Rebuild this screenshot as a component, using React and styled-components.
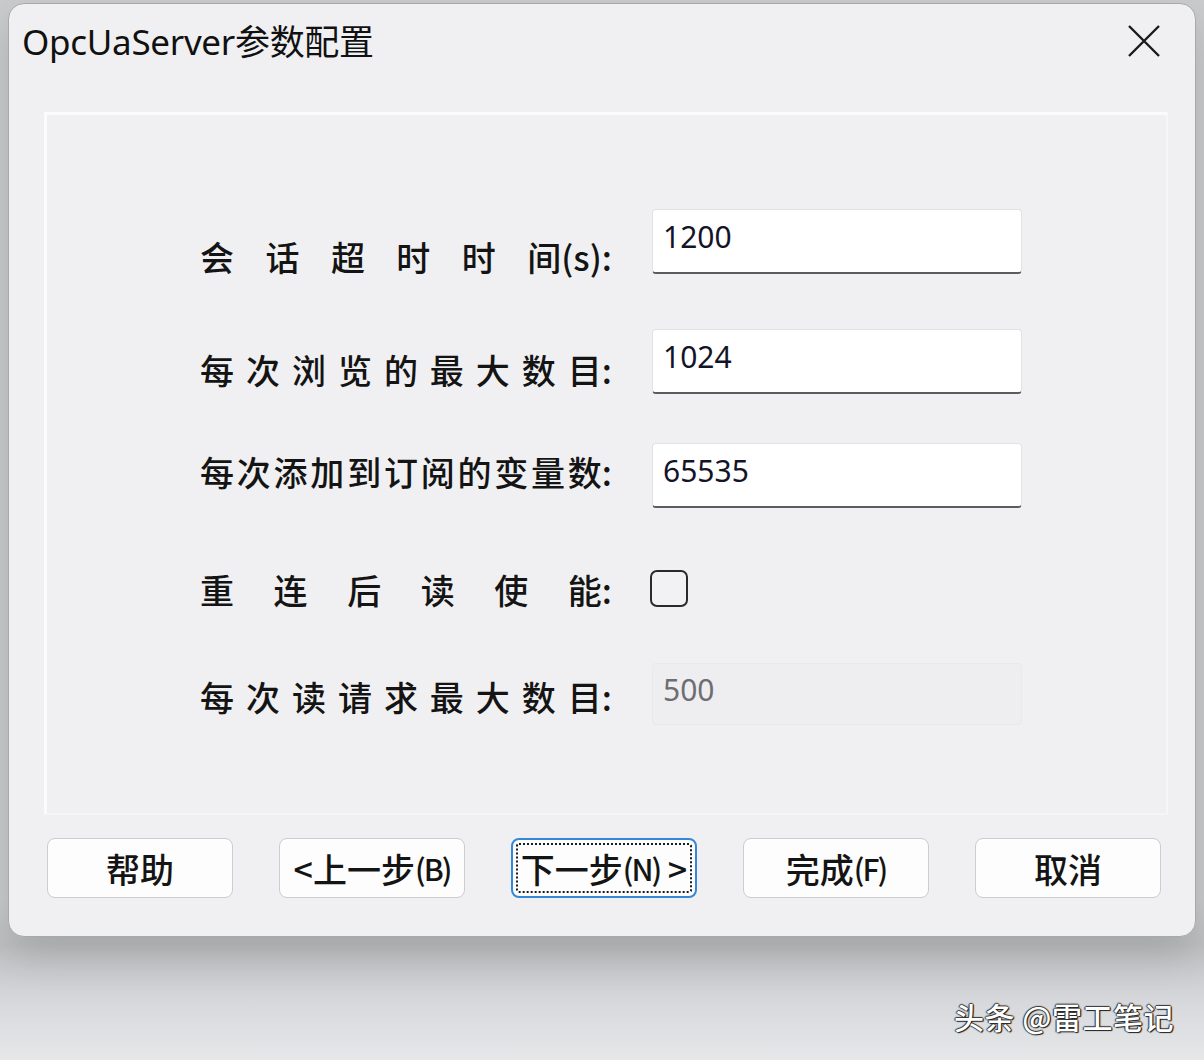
import React from 'react';
import styled, { createGlobalStyle } from 'styled-components';

const GlobalStyle = createGlobalStyle`
  html, body {
    margin: 0;
    padding: 0;
  }
  body {
    width: 1204px;
    height: 1060px;
    overflow: hidden;
    background: #cbccce;
    font-family: "Noto Sans", "Noto Sans CJK SC", sans-serif;
  }
`;

const Page = styled.div`
  display: flex;
  flex-direction: column;
  padding: 3px 8px 0;
  background: linear-gradient(#cbccce 0px, #cbccce 900px, #c0c1c3 945px, #d8d9dc 1005px, #e6e7e9 1060px);
  height: 1060px;
  box-sizing: border-box;
`;

const Dialog = styled.div`
  width: 1188px;
  height: 934px;
  box-sizing: border-box;
  border: 1px solid #a8a9ab;
  border-radius: 16px;
  background: #f0f0f2;
  box-shadow: 0 16px 40px rgba(0, 0, 0, 0.16);
  display: flex;
  flex-direction: column;
`;

const TitleBar = styled.div`
  height: 108px;
  box-sizing: border-box;
  display: flex;
  justify-content: space-between;
  align-items: flex-start;
  padding: 14px 34px 0 13px;
`;

const Title = styled.div`
  font-family: "Noto Sans", "Noto Sans CJK SC", sans-serif;
  font-size: 35px;
  line-height: 48px;
  color: #111;
  letter-spacing: -0.3px;
`;

const CloseButton = styled.div`
  margin-top: 6px;
  width: 34px;
  height: 34px;
  display: flex;
`;

const GroupBox = styled.div`
  margin: 0 27px 0 35px;
  height: 703px;
  box-sizing: border-box;
  border-top: 3px solid #fbfbfc;
  border-left: 3px solid #fbfbfc;
  border-right: 2px solid #f6f6f8;
  border-bottom: 2px solid #f5f5f7;
  padding: 94px 0 0 153px;
`;

const Row = styled.div`
  display: flex;
  align-items: flex-start;
  gap: 40px;
  height: ${p => p.$h || 65}px;
  margin-top: ${p => p.$space || 0}px;
`;

const Label = styled.div`
  width: 412px;
  flex: none;
  display: flex;
  justify-content: space-between;
  font-family: "Noto Sans CJK SC", sans-serif;
  font-weight: 500;
  font-size: 34px;
  line-height: 40px;
  color: #141414;
  padding-top: ${p => p.$drop || 0}px;
  white-space: nowrap;
`;

const Field = styled.input`
  width: 370px;
  height: 65px;
  box-sizing: border-box;
  margin: 0;
  background: #fff;
  border: 1px solid #e2e2e4;
  border-bottom: 2px solid #5c5c5f;
  border-radius: 4px;
  padding: 0 10px 10px;
  font-family: "Noto Sans", sans-serif;
  font-size: 30px;
  color: #141428;
  outline: none;

  &:disabled {
    height: 62px;
    background: #eeeef0;
    border: 1px solid #e9e9eb;
    color: #6e6e72;
  }
`;

const Check = styled.input`
  appearance: none;
  margin: 0 0 0 -2px;
  width: 38px;
  height: 37px;
  box-sizing: border-box;
  border: 2.5px solid #2a2a2c;
  border-radius: 7px;
  background: #f2f2f4;
`;

const ButtonRow = styled.div`
  display: flex;
  justify-content: space-between;
  padding: 0 34px 0 38px;
  margin-top: 23px;
`;

const Button = styled.button`
  width: 186px;
  height: 60px;
  box-sizing: border-box;
  padding: 0;
  background: #fdfdfd;
  border: ${p => (p.$focused ? '2px solid #3488d8' : '1px solid #cdcdd0')};
  border-radius: 8px;
  outline: ${p => (p.$focused ? '2px dotted #1b1b1b' : 'none')};
  outline-offset: -7px;
  font-family: "Noto Sans CJK SC", sans-serif;
  font-weight: 500;
  font-size: 34px;
  color: #141414;
  white-space: nowrap;
  display: flex;
  align-items: center;
  justify-content: center;
`;

const Key = styled.span`
  font-size: 30px;
  letter-spacing: -2px;
`;

const Watermark = styled.div`
  align-self: flex-end;
  margin: 57px 22px 0 0;
  font-family: "Noto Sans CJK SC", sans-serif;
  font-weight: 500;
  font-size: 30px;
  letter-spacing: 0.5px;
  color: #fff;
  text-shadow: 1px 1px 1px #1e1e1e, -1px 0 1px #333, 0 -1px 1px #333, 1px 0 1px #333;
`;

const CloseIcon = () => (
  <svg width="34" height="34" viewBox="0 0 34 34">
    <path d="M2 2 L32 32 M32 2 L2 32" stroke="#1a1a1a" strokeWidth="2.4" fill="none" />
  </svg>
);

const FormLabel = ({ parts, drop }) => (
  <Label $drop={drop}>
    {parts.map((p, i) => (
      <span key={i}>{p}</span>
    ))}
  </Label>
);

// one span per character, keeping the trailing colon on the last one
const split = s => Array.from(s.slice(0, -2)).concat(s.slice(-2));

const App = () => {
  return (
    <>
      <GlobalStyle />
      <Page>
        <Dialog>
          <TitleBar>
            <Title>OpcUaServer参数配置</Title>
            <CloseButton>
              <CloseIcon />
            </CloseButton>
          </TitleBar>
          <GroupBox>
            <Row>
              <FormLabel parts={['会', '话', '超', '时', '时', '间(s):']} drop={28} />
              <Field defaultValue="1200" />
            </Row>
            <Row $space={55}>
              <FormLabel parts={split('每次浏览的最大数目:')} drop={21} />
              <Field defaultValue="1024" />
            </Row>
            <Row $space={49}>
              <FormLabel parts={split('每次添加到订阅的变量数:')} drop={9} />
              <Field defaultValue="65535" />
            </Row>
            <Row $space={62} $h={37}>
              <FormLabel parts={['重', '连', '后', '读', '使', '能:']} />
              <Check type="checkbox" />
            </Row>
            <Row $space={56} $h={62}>
              <FormLabel parts={split('每次读请求最大数目:')} drop={14} />
              <Field defaultValue="500" disabled />
            </Row>
          </GroupBox>
          <ButtonRow>
            <Button>帮助</Button>
            <Button>&lt;上一步<Key>(B)</Key></Button>
            <Button $focused>下一步<Key>(N)</Key>&nbsp;&gt;</Button>
            <Button>完成<Key>(F)</Key></Button>
            <Button>取消</Button>
          </ButtonRow>
        </Dialog>
        <Watermark>头条 @雷工笔记</Watermark>
      </Page>
    </>
  );
};

export default App;
